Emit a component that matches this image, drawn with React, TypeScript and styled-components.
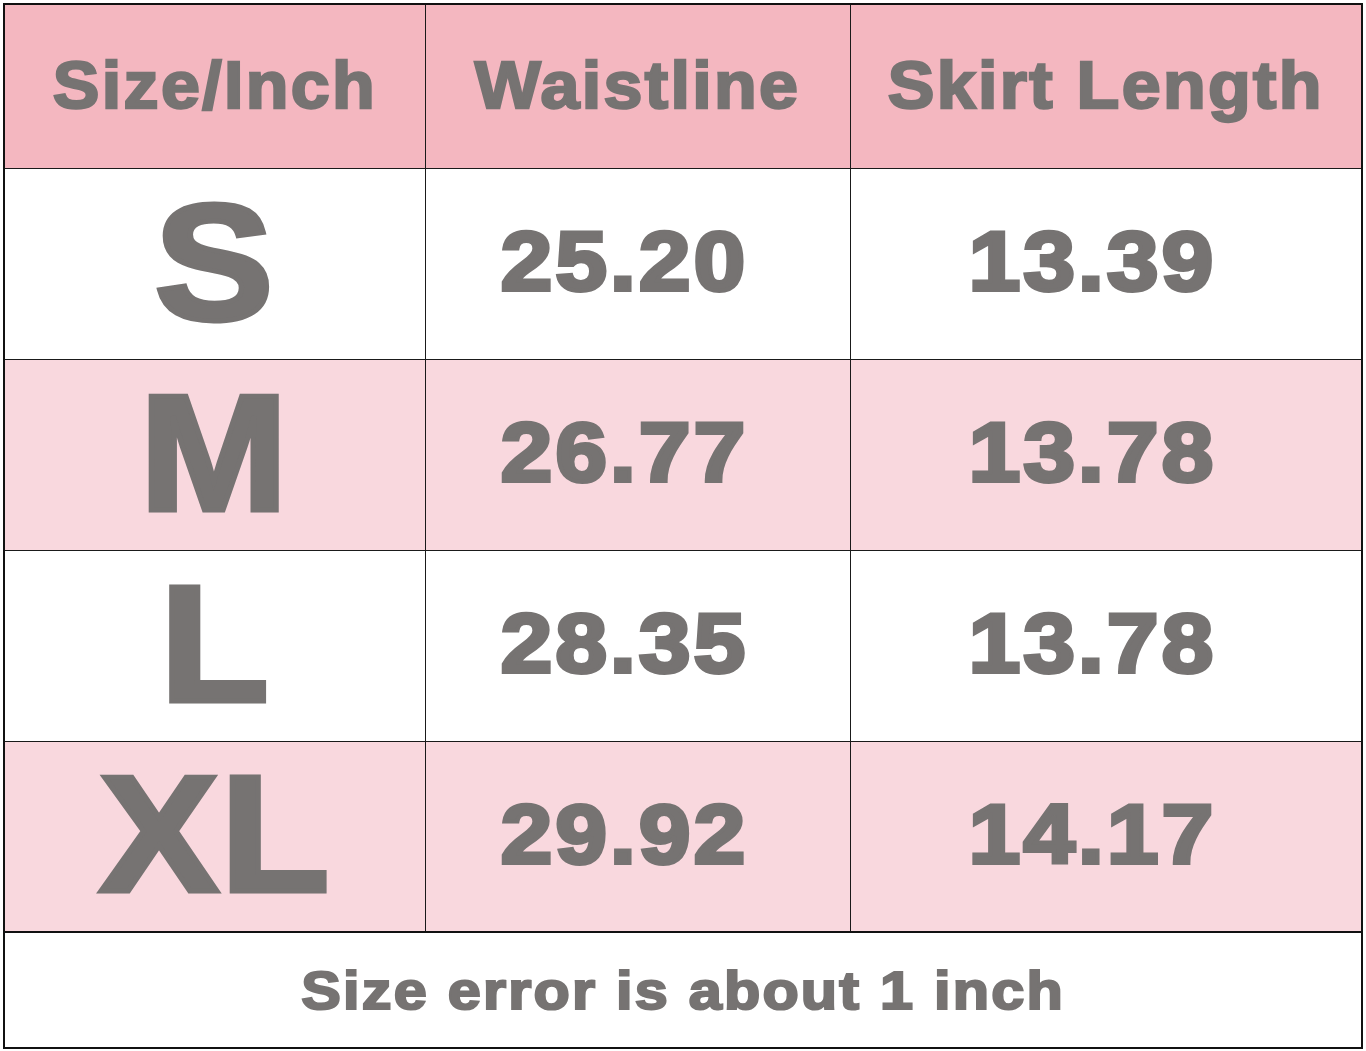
import styled, { createGlobalStyle } from 'styled-components';

const GlobalStyle = createGlobalStyle`
  html, body {
    margin: 0;
    padding: 0;
    background: #ffffff;
  }
  body {
    font-family: "Liberation Sans", Arial, sans-serif;
  }
`;

const INK = '#767372';

const Chart = styled.div`
  margin: 3px 0 0 3px;
  width: 1356px;
  border: 2px solid #111111;
  background: #ffffff;
`;

const Grid = styled.div`
  display: grid;
  grid-template-columns: 420px 424px 510px;
  grid-template-rows: 163px 190px 190px 190px 189px;
  gap: 1px;
  background: #1a1a1a;
`;

const Cell = styled.div<{ tone: 'head' | 'white' | 'pink'; shift?: number }>`
  display: flex;
  align-items: center;
  justify-content: center;
  padding-right: ${({ shift }) => shift ?? 0}px;
  background: ${({ tone }) =>
    tone === 'head' ? '#f4b7c0' : tone === 'pink' ? '#f9d8de' : '#ffffff'};
`;

const Label = styled.span<{ size: number; stroke: number; spacing: number; stretch: number; lift?: number }>`
  display: inline-block;
  font-family: "Liberation Sans", Arial, sans-serif;
  font-weight: 700;
  color: ${INK};
  -webkit-text-stroke: ${({ stroke }) => stroke}px ${INK};
  font-size: ${({ size }) => size}px;
  letter-spacing: ${({ spacing }) => spacing}px;
  line-height: 1;
  white-space: nowrap;
  transform: translateY(${({ lift }) => -(lift ?? 0)}px) scaleX(${({ stretch }) => stretch});
`;

const Note = styled.div`
  height: 114px;
  border-top: 2px solid #111111;
  display: flex;
  align-items: center;
  justify-content: center;
`;

const headers = ['Size/Inch', 'Waistline', 'Skirt Length'];

const rows = [
  { size: 'S', waist: '25.20', skirt: '13.39' },
  { size: 'M', waist: '26.77', skirt: '13.78' },
  { size: 'L', waist: '28.35', skirt: '13.78' },
  { size: 'XL', waist: '29.92', skirt: '14.17' },
];

const App = () => {
  return (
    <>
      <GlobalStyle />
      <Chart>
        <Grid>
          {headers.map((h) => (
            <Cell key={h} tone="head">
              <Label size={66} stroke={2.4} spacing={2.2} stretch={1.06} lift={2}>
                {h}
              </Label>
            </Cell>
          ))}
          {rows.map((r, i) => {
            const tone = i % 2 === 0 ? 'white' : 'pink';
            return [
              <Cell key={r.size + 'a'} tone={tone}>
                <Label size={165} stroke={5} spacing={2} stretch={1.08} lift={2}>
                  {r.size}
                </Label>
              </Cell>,
              <Cell key={r.size + 'b'} tone={tone} shift={26}>
                <Label size={84} stroke={4} spacing={3} stretch={1.1} lift={3}>
                  {r.waist}
                </Label>
              </Cell>,
              <Cell key={r.size + 'c'} tone={tone} shift={26}>
                <Label size={84} stroke={4} spacing={3} stretch={1.1} lift={3}>
                  {r.skirt}
                </Label>
              </Cell>,
            ];
          })}
        </Grid>
        <Note>
          <Label size={54} stroke={2.2} spacing={2} stretch={1.1}>
            Size error is about 1 inch
          </Label>
        </Note>
      </Chart>
    </>
  );
};

export default App;
